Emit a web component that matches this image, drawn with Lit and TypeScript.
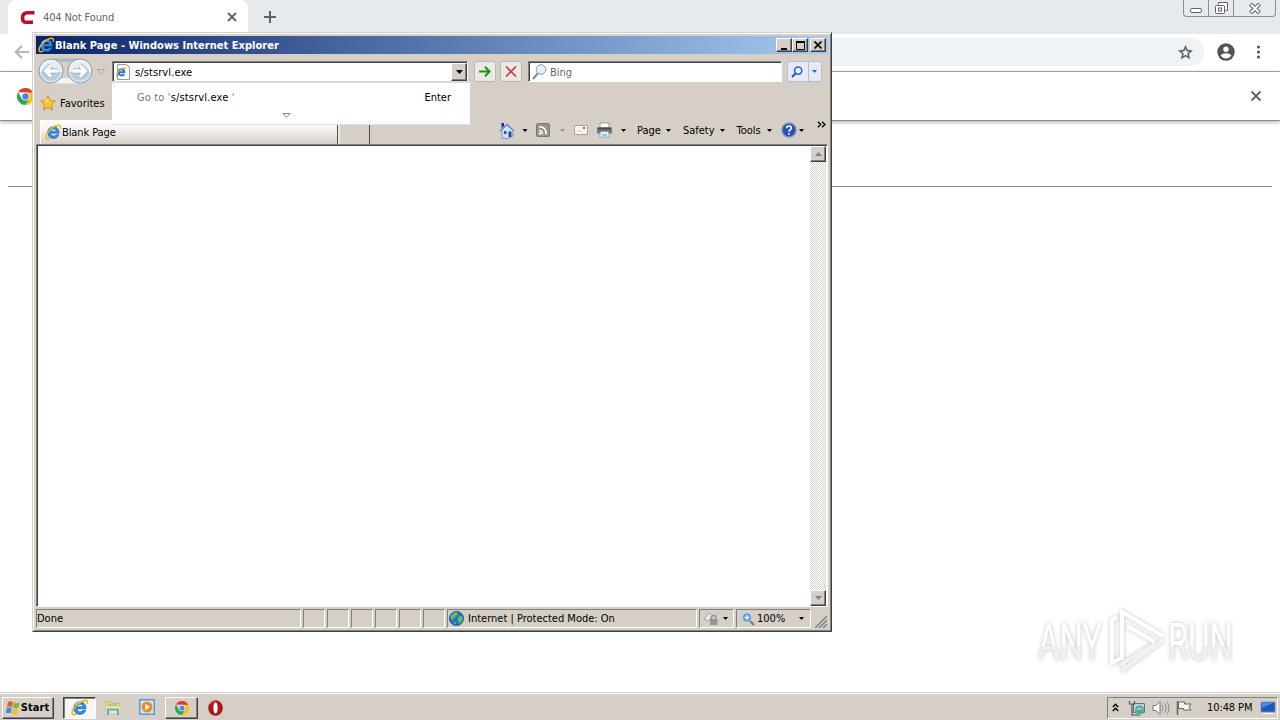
import {LitElement, css, html, svg} from 'lit';
import {customElement} from 'lit/decorators.js';

const explorerIcon = (size: number) => html`
  <svg class="icon" width=${size} height=${size} viewBox="0 0 16 16">
    <path d="M14.2 9.3H5.9c.1 1.700 1.200 2.700 2.700 2.700 1.100 0 1.900-.5 2.400-1.300h3c-.8 2.400-2.800 3.800-5.500 3.800-3.500 0-5.900-2.400-5.900-5.900s2.400-6 5.900-6c3.600 0 5.800 2.500 5.700 6.700zM6 7.200h5.100c-.2-1.400-1.100-2.200-2.500-2.200S6.200 5.800 6 7.200z" fill="#2f8fe0" stroke="#1458a8" stroke-width=".5"/>
    <path d="M4.200 6.200C5 4.200 6.600 3.200 8.700 3.200" fill="none" stroke="#9bdcff" stroke-width="1"/>
    <path d="M15.300 4.800c.7-2.300-.2-3.700-2.200-3.500C9.600 1.700 4.600 5.500 2.300 9.200.7 11.700.5 14.300 2.200 14.700c.9.200 2-.1 3.100-.8" fill="none" stroke="#f0b51c" stroke-width="1.500"/>
  </svg>`;

const chromeIcon = (size: number) => html`
  <svg class="icon" width=${size} height=${size} viewBox="0 0 16 16">
    <path d="M8 8V0a8 8 0 0 1 6.930 4A8 8 0 0 1 8 16z" fill="#fbc116"/>
    <path d="M8 4.200 1.070 4A8 8 0 0 1 14.930 4.200z" fill="#e33b2e"/>
    <path d="M1.070 4A8 8 0 0 0 8 16l3.400-6L8 8 4.700 10z" fill="#2da94f"/>
    <circle cx="8" cy="8" r="3.800" fill="#fff"/>
    <circle cx="8" cy="8" r="3" fill="#4285f4"/>
  </svg>`;

const caret = (color = '#000') => html`
  <svg class="icon" width="5" height="3" viewBox="0 0 5 3"><path d="M0 0h5L2.500 3z" fill=${color}/></svg>`;

const shared = css`
  * {
    box-sizing: border-box;
  }
  .icon {
    display: block;
    flex: none;
  }
  .text {
    white-space: pre;
    line-height: 14px;
    padding-top: 1px;
  }
`;

const systemFont = css`
  :host {
    font-family: 'DejaVu Sans Condensed', 'DejaVu Sans', Tahoma, sans-serif;
    font-stretch: condensed;
    font-size: 11px;
    color: #000;
  }
`;

@customElement('chrome-page')
export class ChromePage extends LitElement {
  static get styles() {
    return [
      shared,
      systemFont,
      css`
        :host {
          display: flex;
          flex-direction: column;
          flex: 1;
          background: #fff;
        }
        .tabs {
          height: 34px;
          background: #e7eaed;
          display: flex;
          padding-left: 8px;
        }
        .tab {
          width: 240px;
          background: #fff;
          border-radius: 8px 8px 0 0;
          display: flex;
          align-items: center;
          padding: 0 11px 0 12px;
        }
        .tab .text {
          color: #5f6368;
          margin-left: 8px;
          flex: 1;
          letter-spacing: -0.12px;
        }
        .plus {
          margin: 11px 0 0 16px;
        }
        .controls {
          margin: 0 4px 0 auto;
          height: 17px;
          width: 93px;
          border: 1px solid #8b8f93;
          border-top: 0;
          border-radius: 0 0 4px 4px;
          display: flex;
        }
        .controls div {
          display: flex;
          align-items: center;
          justify-content: center;
          width: 25px;
          border-right: 1px solid #8b8f93;
        }
        .controls div:last-child {
          flex: 1;
          border: 0;
        }
        .bar {
          height: 38px;
          border-bottom: 1px solid #a9abad;
          display: flex;
          align-items: center;
          padding: 0 14px 1px;
        }
        .omnibox {
          flex: 1;
          height: 28px;
          margin: 0 13px 0 60px;
          border-radius: 0 14px 14px 0;
          background: #f0f3f6;
          display: flex;
          align-items: center;
          justify-content: flex-end;
          padding-right: 10px;
        }
        .menu {
          margin-left: 16px;
        }
        .info {
          height: 49px;
          border-bottom: 1px solid #8d8d8d;
          box-shadow: 0 1px 4px rgba(0, 0, 0, 0.35);
          display: flex;
          align-items: center;
          justify-content: space-between;
          padding: 0 19px 0 17px;
        }
        .rule {
          margin: 65px 8px 0;
          height: 1px;
          background: #8c8c8c;
        }
      `,
    ];
  }

  render() {
    return html`
      <div class="tabs">
        <div class="tab">
          <svg class="icon" width="15" height="15" viewBox="0 0 15 15">
            <path d="M14.500 2.700H7.500Q3 2.700 2.500 7.500 2.300 12 5.500 12.200H13" fill="none" stroke="#b3122a" stroke-width="3.600"/>
          </svg>
          <span class="text">404 Not Found</span>
          <svg class="icon" width="10" height="10" viewBox="0 0 10 10"><path d="M1 1l8 8M9 1 1 9" stroke="#5f6368" stroke-width="1.800"/></svg>
        </div>
        <svg class="icon plus" width="12" height="12" viewBox="0 0 12 12"><path d="M6 0v12M0 6h12" stroke="#5f6368" stroke-width="2"/></svg>
        <div class="controls">
          <div><svg class="icon" width="12" height="16" viewBox="0 0 12 16"><rect x=".5" y="8.500" width="11" height="4" rx="1.500" fill="#fff" stroke="#5e6266"/></svg></div>
          <div><svg class="icon" width="13" height="14" viewBox="0 0 13 14"><path d="M3.500 3.500V1.500h9v8h-2" fill="#fff" stroke="#5e6266"/><rect x=".5" y="4.500" width="9" height="8" rx="1" fill="#fff" stroke="#5e6266"/><rect x="3.500" y="7" width="3" height="3" fill="none" stroke="#5e6266"/></svg></div>
          <div><svg class="icon" width="12" height="11" viewBox="0 0 12 11"><path d="M1.500 1l9 9M10.500 1l-9 9" stroke="#5e6266" stroke-width="4"/><path d="M2 1.500l8 8M10 1.500l-8 8" stroke="#fff" stroke-width="2"/></svg></div>
        </div>
      </div>
      <div class="bar">
        <svg class="icon" width="15" height="14" viewBox="0 0 15 14"><path d="M15 7H2M8 .8 1.700 7 8 13.200" fill="none" stroke="#b4b6b8" stroke-width="2"/></svg>
        <div class="omnibox">
          <svg class="icon" width="17" height="17" viewBox="0 0 24 24"><path d="M22 9.240l-7.190-.62L12 2 9.190 8.630 2 9.240l5.460 4.730L5.820 21 12 17.270 18.180 21l-1.630-7.030L22 9.240zM12 15.400l-3.760 2.270 1-4.280-3.320-2.880 4.380-.38L12 6.100l1.710 4.040 4.380.38-3.320 2.880 1 4.280L12 15.400z" fill="#54585c" stroke="#54585c" stroke-width=".5"/></svg>
        </div>
        <svg class="icon" width="18" height="18" viewBox="0 0 18 18"><circle cx="9" cy="9" r="8.700" fill="#505458"/><circle cx="9" cy="6.200" r="2.700" fill="#fff"/><path d="M3.500 12.600Q5.500 10.300 9 10.300t5.500 2.300Q12.500 15.500 9 15.500t-5.500-2.900z" fill="#fff"/></svg>
        <svg class="icon menu" width="15" height="14" viewBox="0 0 15 14"><g fill="#54585c"><circle cx="7.500" cy="2" r="1.600"/><circle cx="7.500" cy="7" r="1.600"/><circle cx="7.500" cy="12" r="1.600"/></g></svg>
      </div>
      <div class="info">
        ${chromeIcon(17)}
        <svg class="icon" width="10" height="10" viewBox="0 0 10 10"><path d="M.5.5l9 9M9.500.5l-9 9" stroke="#54585c" stroke-width="1.900"/></svg>
      </div>
      <div class="rule"></div>
    `;
  }
}

@customElement('explorer-window')
export class ExplorerWindow extends LitElement {
  static get styles() {
    return [
      shared,
      systemFont,
      css`
        :host {
          display: flex;
          flex-direction: column;
          width: 800px;
          height: 600px;
          background: #d5cfc7;
          border: 1px solid;
          border-color: #d5cfc7 #404040 #404040 #d5cfc7;
          box-shadow: inset 1px 1px #fff, inset -1px -1px #808080;
          padding: 3px;
          box-sizing: border-box;
        }
        .title {
          height: 18px;
          background: linear-gradient(90deg, #0a246a, #a6caf0);
          display: flex;
          align-items: center;
          padding: 0 2px;
          color: #fff;
          font-weight: bold;
        }
        .title .text {
          margin-left: 1px;
          flex: 1;
          letter-spacing: 0.03px;
        }
        .win {
          width: 16px;
          height: 14px;
          background: #d5cfc7;
          border: 1px solid;
          border-color: #fff #404040 #404040 #fff;
          box-shadow: inset -1px -1px #808080;
          display: flex;
          align-items: center;
          justify-content: center;
        }
        .title .win:last-child {
          margin-left: 2px;
        }
        .nav {
          height: 34px;
          display: flex;
          padding: 7px 5px 0 2px;
        }
        .arrows {
          margin-top: -3px;
        }
        .recent {
          margin: 8px 7px 0 3px;
        }
        .field {
          height: 21px;
          background: #fff;
          border: 1px solid;
          border-color: #808080 #fff #fff #808080;
          box-shadow: inset 1px 1px #404040;
          display: flex;
          align-items: center;
          padding: 1px 0 0 3px;
        }
        .address {
          width: 356px;
          position: relative;
          padding-left: 2px;
        }
        .address > .text {
          margin-left: 4px;
          flex: 1;
          letter-spacing: 0.1px;
        }
        .drop {
          width: 16px;
          height: 18px;
          margin-bottom: 1px;
          background: #d5cfc7;
          border: 1px solid;
          border-color: #fff #404040 #404040 #fff;
          box-shadow: inset -1px -1px #808080;
          display: flex;
          align-items: center;
          justify-content: center;
        }
        .suggest {
          position: absolute;
          left: -1px;
          top: 19px;
          width: 358px;
          height: 44px;
          background: #fff;
          border-top: 2px solid #dcdad6;
          border-bottom: 1px solid #e2e0dc;
          display: flex;
          flex-direction: column;
          align-items: center;
        }
        .suggest-row {
          width: 100%;
          display: flex;
          padding: 7px 19px 0 25px;
          height: 30px;
        }
        .suggest .icon {
          margin-right: 10px;
        }
        .muted {
          color: #777;
        }
        .goto {
          flex: 1;
          letter-spacing: 0.15px;
        }
        .square {
          width: 22px;
          height: 21px;
          border: 1px solid #b7b9bd;
          border-radius: 2px;
          background: #ece9e4;
          display: flex;
          align-items: center;
          justify-content: center;
        }
        .go {
          margin: 0 4px 0 6px;
        }
        .search {
          width: 254px;
          margin: 0 5px 0 6px;
        }
        .search .text {
          margin-left: 3px;
          color: #666;
        }
        .find {
          width: 35px;
          background: #e6ebf3;
          border-color: #b5bfd2;
          justify-content: flex-end;
        }
        .find > .icon {
          margin-right: 5px;
        }
        .find-drop {
          width: 13px;
          border-left: 1px solid #b5bfd2;
          height: 19px;
          padding: 8px 0 0 3px;
        }
        .favorites {
          height: 32px;
          display: flex;
          align-items: center;
          padding: 0 0 2px 4px;
        }
        .favorites .text {
          margin-left: 4px;
        }
        .commands {
          height: 24px;
          display: flex;
          padding-left: 4px;
        }
        .tab {
          width: 298px;
          background: linear-gradient(#fff, #f5f4f2 35%, #d5cfc7);
          border-left: 1px solid #fff;
          border-right: 1px solid #505050;
          display: flex;
          align-items: center;
          padding-left: 4px;
        }
        .tab .text {
          margin-left: 1px;
          letter-spacing: -0.1px;
        }
        .new-tab {
          width: 32px;
          height: 19px;
          margin-top: 5px;
          border-left: 2px solid #e8e6e2;
          border-right: 1px solid #505050;
        }
        .tools {
          margin-left: 129px;
          flex: 1;
          display: flex;
          align-items: center;
          height: 20px;
        }
        .rss {
          margin-left: -7px;
        }
        .more {
          margin: -12px 0 0 12px;
        }
        .view {
          height: 463px;
          flex: none;
          background: #fff;
          border: 1px solid;
          border-color: #808080 #fff #fff #808080;
          box-shadow: inset 1px 1px #404040;
          display: flex;
          justify-content: flex-end;
          padding: 1px 1px 0 2px;
        }
        .scroll {
          width: 16px;
          background: repeating-conic-gradient(#fff 0 25%, #d9d6cf 0 50%) 0 0 / 2px 2px;
          display: flex;
          flex-direction: column;
          justify-content: space-between;
        }
        .scroll .win {
          height: 16px;
        }
        .status {
          height: 21px;
          display: flex;
          padding-top: 2px;
          gap: 2px;
        }
        .cell {
          width: 22px;
          height: 19px;
          border: 1px solid;
          border-color: #808080 #fff #fff #808080;
          display: flex;
          align-items: center;
        }
        .done {
          width: 265px;
        }
        .zone {
          width: 250px;
          padding-left: 1px;
        }
        .zone .text {
          margin-left: 4px;
        }
        .lock {
          width: 35px;
          padding-left: 3px;
          gap: 4px;
        }
        .zoom {
          width: 75px;
          padding-left: 4px;
        }
        .zoom .text {
          margin-left: 1px;
        }
        .grip {
          margin: 7px 0 0 2px;
        }
      `,
    ];
  }

  renderArrow(x: number, d: string) {
    return svg`
      <circle cx=${x} cy="13" r="12" fill="#e8edf3" stroke="#8c98a8"/>
      <path d="M${x - 11} 14a11 10.500 0 0 0 22 0z" fill="#b4cfdf"/>
      <circle cx=${x} cy="13" r="10.500" fill="none" stroke="#fff" stroke-opacity=".7"/>
      <path d=${d} fill="none" stroke="#8fa5b8" stroke-width="5"/>
      <path d=${d} fill="none" stroke="#fff" stroke-width="3.400"/>`;
  }

  renderTitle() {
    return html`
      <div class="title">
        ${explorerIcon(16)}
        <span class="text">Blank Page - Windows Internet Explorer</span>
        <div class="win"><svg class="icon" width="9" height="9"><path d="M1 7h6v2H1z"/></svg></div>
        <div class="win"><svg class="icon" width="9" height="9"><path d="M.5.500h8v8h-8z" fill="none" stroke="#000"/><path d="M0 0h9v2H0z"/></svg></div>
        <div class="win"><svg class="icon" width="8" height="8"><path d="M.5.5l7 7M7.500.5l-7 7" stroke="#000" stroke-width="1.600"/></svg></div>
      </div>`;
  }

  renderAddress() {
    return html`
      <div class="field address">
        <svg class="icon" width="16" height="16" viewBox="0 0 16 16">
          <path d="M2.500.5h9l3 3v12h-12z" fill="#fff" stroke="#9a9a9a"/>
          <path d="M3.500 8.300H9.400Q9.300 5.300 6.500 5.300 3.500 5.400 3.500 8.300q.1 3.200 3 3.200 2 0 2.700-1.300" fill="none" stroke="#2277cc" stroke-width="1.900"/>
          <path d="M10.500 5Q10.800 2.800 6.500 4.700 1 8.500 1.500 12.500" fill="none" stroke="#e9b020" stroke-width="1.200"/>
        </svg>
        <span class="text">s/stsrvl.exe</span>
        <div class="drop"><svg class="icon" width="7" height="4"><path d="M0 0h7L3.500 4z"/></svg></div>
        <div class="suggest">
          <div class="suggest-row">
            <span class="text goto"><span class="muted">Go to '</span>s/stsrvl.exe<span class="muted"> '</span></span>
            <span class="text">Enter</span>
          </div>
          <svg class="icon" width="9" height="5" viewBox="0 0 9 5"><path d="M.8.5h7.400L4.500 4.300z" fill="#fff" stroke="#888"/></svg>
        </div>
      </div>`;
  }

  renderNav() {
    return html`
      <div class="nav">
        <svg class="icon arrows" width="56" height="28" viewBox="0 0 56 28">
          <path d="M13 .5h29Q34 4 28 4T13 .5z" fill="#b3b8c0"/>
          <path d="M13 25.500h29L30 20h-5z" fill="#f2f3f5"/>
          ${this.renderArrow(13, 'M20 13H8M13 7.500 7.500 13l5.500 5.500')}
          ${this.renderArrow(42, 'M35 13h12M42 7.500l5.500 5.500-5.500 5.500')}
        </svg>
        <svg class="icon recent" width="8" height="6" viewBox="0 0 8 6"><path d="M.5.5h7L4 5z" fill="#dedbd5" stroke="#aaa7a0"/></svg>
        ${this.renderAddress()}
        <div class="square go"><svg class="icon" width="12" height="11" viewBox="0 0 12 11"><path d="M0 5.500h10.500M6 .8l4.700 4.700L6 10.200" fill="none" stroke="#159415" stroke-width="2"/></svg></div>
        <div class="square"><svg class="icon" width="12" height="11" viewBox="0 0 12 11"><path d="M1 .5l10 10M11 .5 1 10.500" stroke="#c8404a" stroke-width="1.700"/></svg></div>
        <div class="field search">
          <svg class="icon" width="15" height="16" viewBox="0 0 15 16"><path d="M6 9 1 15" stroke="#8b8b8b" stroke-width="2"/><circle cx="9" cy="5.500" r="4.800" fill="#e3effb" stroke="#8d9aa6"/></svg>
          <span class="text">Bing</span>
        </div>
        <div class="square find">
          <svg class="icon" width="12" height="12" viewBox="0 0 12 12"><path d="M4.500 7.500 1 11" stroke="#1c4fc0" stroke-width="2"/><circle cx="7.200" cy="4.600" r="3.600" fill="#eaf3ff" stroke="#2464d4" stroke-width="1.600"/></svg>
          <div class="find-drop">${caret('#2464c4')}</div>
        </div>
      </div>`;
  }

  renderTools() {
    return html`
      <div class="tools">
        <svg class="icon" width="16" height="17" viewBox="0 0 16 17">
          <path d="M3 8v8l6 .5L14 14V8L8 3z" fill="#cfe1f6" stroke="#6483b4" stroke-width=".8"/>
          <path d="M1 9l7-6.500L15 9" fill="none" stroke="#6f8bbb" stroke-width="1.400"/>
          <path d="M2.500 1h2.500v3l-2.500 2z" fill="#1c20b8"/>
          <path d="M9.500 9.500h3V15h-3z" fill="#2b4c87"/><path d="M5 9h2.500v3H5z" fill="#35578f"/>
        </svg>
        <svg class="icon" width="28" height="14" viewBox="0 0 28 14"><path d="M7.500 6h5L10 9z"/></svg>
        <svg class="icon rss" width="14" height="14" viewBox="0 0 14 14">
          <rect x=".5" y=".5" width="13" height="13" rx="1.500" fill="#969492" stroke="#7b7977"/>
          <path d="M3 7.500q3.500 0 3.500 3.800M3 3.800q7.200 0 7.200 7.500" fill="none" stroke="#fff" stroke-width="1.500"/><circle cx="3.900" cy="10.500" r="1.200" fill="#fff"/>
        </svg>
        <svg class="icon" width="24" height="14" viewBox="0 0 24 14"><path d="M10 6h5l-2.500 3z" fill="#979490"/></svg>
        <svg class="icon" width="14" height="10" viewBox="0 0 14 10"><rect x=".5" y=".5" width="13" height="9" fill="#f7f5f3" stroke="#aaa5a2"/><path d="M9 2h2v2H9z" fill="#c94a50"/><path d="M3 6h5" stroke="#ccc"/></svg>
        <svg class="icon" width="25" height="16" viewBox="0 0 25 16">
          <path d="M12 1h9v5h-9z" fill="#fff" stroke="#999"/>
          <path d="M9 5.500h15v6H9z" fill="#77777c"/><path d="M10 5.500h13v2H10z" fill="#4d4d54"/>
          <path d="M12.500 9.500h8l1 5.500h-10z" fill="#eaf2fb" stroke="#7890a8" stroke-width=".7"/><path d="M14 13h5" stroke="#3aa0c8"/>
        </svg>
        <svg class="icon" width="24" height="14" viewBox="0 0 24 14"><path d="M8 6h5l-2.500 3z"/></svg>
        <span class="text">Page</span>
        <svg class="icon" width="22" height="14" viewBox="0 0 22 14"><path d="M5 6h5L7.500 9z"/></svg>
        <span class="text">Safety</span>
        <svg class="icon" width="22" height="14" viewBox="0 0 22 14"><path d="M5 6h5L7.500 9z"/></svg>
        <span class="text">Tools</span>
        <svg class="icon" width="20" height="14" viewBox="0 0 20 14"><path d="M6 6h5L8.500 9z"/></svg>
        <svg class="icon" width="24" height="16" viewBox="0 0 24 16">
          <circle cx="8" cy="8" r="7" fill="#2b50b0" stroke="#7d91c6" stroke-width="1.400"/>
          <path d="M5.500 6.300Q5.700 4 8 4t2.400 2q0 1.300-1.500 2Q8 8.500 8 9.800M8 11v1.800" fill="none" stroke="#fff" stroke-width="1.600"/>
          <path d="M18 7h5l-2.500 3z"/>
        </svg>
        <svg class="icon more" width="9" height="7" viewBox="0 0 9 7"><path d="M.8.8l3 2.700-3 2.700M5 .8l3 2.700-3 2.700" fill="none" stroke="#000" stroke-width="1.300"/></svg>
      </div>`;
  }

  renderStatus() {
    return html`
      <div class="status">
        <div class="cell done"><span class="text">Done</span></div>
        ${[1, 2, 3, 4, 5, 6].map(() => html`<div class="cell"></div>`)}
        <div class="cell zone">
          <svg class="icon" width="15" height="15" viewBox="0 0 15 15"><circle cx="7.500" cy="7.500" r="7" fill="#2b73c6" stroke="#285588"/><path d="M2 4.500 6 1l3 1-2 3.500-2 1L4 9 1.500 7.500zM9 6l4-1 .8 4L11 12.500 9 10zM5 11l2 .5v2L5.500 13z" fill="#62c258"/></svg>
          <span class="text">Internet | Protected Mode: On</span>
        </div>
        <div class="cell lock">
          <svg class="icon" width="16" height="15" viewBox="0 0 16 15"><path d="M1 8l5-6 4 3-5 5z" fill="#e9e8e6" stroke="#aaa8a5"/><path d="M8.500 8V6.500a2.200 2.200 0 0 1 4.400 0V8" fill="none" stroke="#8e8e8e" stroke-width="1.300"/><rect x="7" y="8" width="7.500" height="6" fill="#969696"/></svg>
          ${caret()}
        </div>
        <div class="cell zoom">
          <svg class="icon" width="15" height="14" viewBox="0 0 15 14"><path d="M8 8l5 5" stroke="#98703c" stroke-width="2"/><circle cx="6" cy="5.500" r="4.500" fill="#4e94dc" stroke="#bfd5ea"/><path d="M6 3v5M3.500 5.500h5" stroke="#fff" stroke-width="1.400"/></svg>
          <span class="text">100%</span>
          <svg class="icon" width="20" height="5" viewBox="0 0 20 5"><path d="M14 1h5l-2.500 3z"/></svg>
        </div>
        <svg class="icon grip" width="12" height="12" viewBox="0 0 12 12"><path d="M12 0 0 12M12 4 4 12M12 8 8 12" stroke="#808080" stroke-width="1.500"/></svg>
      </div>`;
  }

  render() {
    return html`
      ${this.renderTitle()}
      ${this.renderNav()}
      <div class="favorites">
        <svg class="icon" width="16" height="16" viewBox="0 0 16 16"><path d="M8 .8l2.100 4.800 5.200.5-3.900 3.500 1.100 5.200L8 12.100l-4.500 2.700 1.100-5.200L.7 6.100l5.200-.5z" fill="#ffc928" stroke="#d8881a"/><path d="M8 3l1 3.500-5 .5" fill="#ffe98e"/></svg>
        <span class="text">Favorites</span>
      </div>
      <div class="commands">
        <div class="tab">${explorerIcon(16)}<span class="text">Blank Page</span></div>
        <div class="new-tab"></div>
        ${this.renderTools()}
      </div>
      <div class="view">
        <div class="scroll">
          <div class="win"><svg class="icon" width="7" height="4"><path d="M0 4h7L3.500 0z" fill="#808080"/></svg></div>
          <div class="win"><svg class="icon" width="7" height="4"><path d="M0 0h7L3.500 4z" fill="#808080"/></svg></div>
        </div>
      </div>
      ${this.renderStatus()}
    `;
  }
}

@customElement('task-bar')
export class TaskBar extends LitElement {
  static get styles() {
    return [
      shared,
      systemFont,
      css`
        :host {
          height: 27px;
          background: #d5cfc7;
          border-top: 1px solid #fff;
          box-shadow: 0 -1px #d5cfc7;
          display: flex;
          align-items: center;
          padding: 1px 2px 0;
          box-sizing: border-box;
        }
        .button {
          height: 22px;
          display: flex;
          align-items: center;
          justify-content: center;
          border: 1px solid;
          border-color: #fff #404040 #404040 #fff;
          box-shadow: inset -1px -1px #808080;
        }
        .start {
          width: 52px;
          font-weight: bold;
          letter-spacing: 0.1px;
          padding-right: 2px;
        }
        .active {
          width: 33px;
          margin: 0 9px 0 9px;
          background: #f7f6f4;
          border-color: #404040 #fff #fff #404040;
          box-shadow: inset 1px 1px #808080;
        }
        .running {
          width: 33px;
          margin: 0 10px 0 9px;
        }
        .player {
          margin-left: 18px;
        }
        .tray {
          margin-left: auto;
          width: 171px;
          height: 22px;
          border: 1px solid;
          border-color: #808080 #fff #fff #808080;
          display: flex;
          align-items: center;
          padding-left: 4px;
        }
        .tray .text {
          margin: 0 8px 0 13px;
          letter-spacing: -0.1px;
        }
      `,
    ];
  }

  render() {
    return html`
      <div class="button start">
        <svg class="icon" width="16" height="16" viewBox="0 0 16 16">
          <path d="M3 2q2.500-1.300 5 0L7 7.200q-2.500-1.300-5 0z" fill="#e8612c"/>
          <path d="M9 2.500q2.500 1.300 5.500 0l-1 5.200q-2.500 1.300-5.500 0z" fill="#7db93c"/>
          <path d="M1.700 8.200q2.500-1.300 5 0L5.700 13.400q-2.500-1.300-5 0z" fill="#3d8fd8"/>
          <path d="M7.700 8.700q2.500 1.300 5.500 0l-1 5.200q-2.500 1.300-5.500 0z" fill="#f5bd28"/>
        </svg>
        <span class="text">Start</span>
      </div>
      <div class="button active">${explorerIcon(17)}</div>
      <svg class="icon" width="16" height="16" viewBox="0 0 16 16">
        <path d="M1 2h5l1.500 1.500H14V12H1z" fill="#f0d87a" stroke="#c9a94a" stroke-width=".7"/>
        <path d="M3 4h9v4H3z" fill="#a9d67d"/><path d="M1 6.500h14V13H1z" fill="#f8e7a2"/>
        <path d="M3 15V9.500h10V15" fill="none" stroke="#5baede" stroke-width="2.200"/>
      </svg>
      <svg class="icon player" width="17" height="17" viewBox="0 0 17 17">
        <rect x=".8" y=".8" width="14.400" height="14.400" fill="#d2e8f8" stroke="#4a98d6" stroke-width="1.400"/>
        <circle cx="8" cy="8" r="5.500" fill="#f38a1c"/><path d="M6.300 4.800 11 8l-4.700 3.200z" fill="#fff"/>
      </svg>
      <div class="button running">${chromeIcon(14)}</div>
      <svg class="icon" width="15" height="16" viewBox="0 0 15 16">
        <ellipse cx="7.500" cy="8" rx="7.300" ry="7.800" fill="#b01319"/><ellipse cx="7.500" cy="8" rx="2.100" ry="5.400" fill="#fff"/><path d="M2 4Q4 1 7.500 1" fill="none" stroke="#e4686a"/>
      </svg>
      <div class="tray">
        <svg class="icon" width="7" height="9" viewBox="0 0 7 9"><path d="M.8 4l2.700-2.700L6.200 4M.8 8l2.700-2.700L6.200 8" fill="none" stroke="#000" stroke-width="1.400"/></svg>
        <svg class="icon" width="28" height="16" viewBox="0 0 28 16">
          <path d="M14.500 3.500h11v9h-11z" fill="#b5d4d8" stroke="#60767c"/><path d="M10.500 1v3h5V1M13 4v11h8" fill="none" stroke="#555" stroke-width="1.200"/>
          <circle cx="20.500" cy="10" r="4.500" fill="#4ba89a"/><path d="M18 10.500l2-2.500 3 1.500" fill="none" stroke="#dff4ee"/>
        </svg>
        <svg class="icon" width="25" height="16" viewBox="0 0 25 16"><path d="M6 5.500h3L13 1.500v13L9 10.500H6z" fill="#fff" stroke="#777"/><path d="M15 5q2 3 0 6M17.500 3q3.200 5 0 10M20 1.800q4 6.200 0 12.400" fill="none" stroke="#8c8c8c"/></svg>
        <svg class="icon" width="22" height="16" viewBox="0 0 22 16"><path d="M5.500 1v14" stroke="#666" stroke-width="1.500"/><path d="M6.500 2h6v2h6.500l-2 3 2 3h-7.500V8.500h-5z" fill="#f5f4f2" stroke="#666"/></svg>
        <span class="text">10:48 PM</span>
        <svg class="icon" width="16" height="14" viewBox="0 0 16 14"><path d="M1 1h14v10H1z" fill="#1e58b8" stroke="#7a93b8" stroke-width=".8"/><path d="M1.500 1.500h13L2 7z" fill="#4d8be0"/><path d="M3 12.500h10" stroke="#fff"/></svg>
      </div>
    `;
  }
}

@customElement('app-root')
export class AppRoot extends LitElement {
  static get styles() {
    return [
      css`
        :host {
          display: flex;
          flex-direction: column;
          width: 1280px;
          height: 720px;
          position: relative;
          overflow: hidden;
        }
        .window {
          position: absolute;
          left: 32px;
          top: 32px;
        }
        .watermark {
          position: absolute;
          left: 1030px;
          top: 600px;
          filter: drop-shadow(0 0 2px rgba(0, 0, 0, 0.24));
        }
        .watermark text {
          font-family: Roboto, 'Liberation Sans', sans-serif;
          font-size: 51px;
        }
      `,
    ];
  }

  render() {
    return html`
      <chrome-page></chrome-page>
      <task-bar></task-bar>
      <explorer-window class="window"></explorer-window>
      <svg class="watermark" width="230" height="90" viewBox="0 0 230 90">
        <defs>
          <linearGradient id="fade" x1="0" y1="0" x2="0" y2="1">
            <stop offset=".55" stop-color="#fff"/>
            <stop offset=".56" stop-color="#f1f1f1"/>
          </linearGradient>
        </defs>
        <text x="8" y="60" textLength="64" lengthAdjust="spacingAndGlyphs" fill="url(#fade)">ANY</text>
        <text x="138" y="60" textLength="65" lengthAdjust="spacingAndGlyphs" fill="url(#fade)">RUN</text>
        <g fill="none" stroke-width="4">
          <path d="M87 17l-5 3v43l9-5M92 60V12l41 24M97 26l28 16" stroke="#fff"/>
          <path d="M90 65l35-21M133 40 94 69V64" stroke="#f1f1f1"/>
        </g>
      </svg>
    `;
  }
}
